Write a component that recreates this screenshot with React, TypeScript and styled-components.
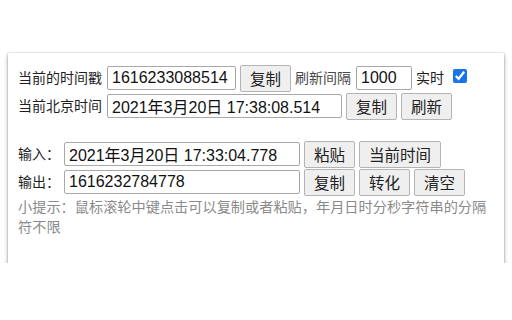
import styled, { createGlobalStyle } from "styled-components"

const Global = createGlobalStyle`
	html, body {
		margin: 0;
		background: #fff;
	}
	body {
		font-family: "Liberation Sans", "Noto Sans CJK SC", sans-serif;
		color: #222;
	}
`

export default function App() {
	return (
		<>
			<Global />
			<Page>
				<Panel>
					<Row>
						<Label>当前的时间戳</Label>
						<Field width={129} defaultValue="1616233088514" />
						<Button>复制</Button>
						<Label muted>刷新间隔</Label>
						<Field width={56} defaultValue="1000" />
						<Label>实时</Label>
						<Check type="checkbox" defaultChecked />
					</Row>
					<Row>
						<Label>当前北京时间</Label>
						<Field width={235} defaultValue="2021年3月20日 17:38:08.514" />
						<Button>复制</Button>
						<Button>刷新</Button>
					</Row>

					<Block>
						<Row>
							<Label wide>输入：</Label>
							<Field width={236} defaultValue="2021年3月20日 17:33:04.778" />
							<Button>粘贴</Button>
							<Button>当前时间</Button>
						</Row>
						<Row>
							<Label wide>输出：</Label>
							<Field width={236} defaultValue="1616232784778" />
							<Button>复制</Button>
							<Button>转化</Button>
							<Button>清空</Button>
						</Row>
						<Hint>
							小提示：鼠标滚轮中键点击可以复制或者粘贴，年月日时分秒字符串的分隔符不限
						</Hint>
					</Block>
				</Panel>
			</Page>
		</>
	)
}

//style

const Page = styled.div`
	padding: 53px 8px 0 8px;
`

const Panel = styled.div`
	width: 496px;
	box-sizing: border-box;
	padding: 11px 10px 26px 10px;
	background: #fff;
	box-shadow:
		0 2px 4px rgba(0, 0, 0, 0.4),
		0 0 1px rgba(0, 0, 0, 0.3);
`

const Row = styled.div`
	display: flex;
	align-items: center;
	height: 28px;
	gap: 4px;
`

const Block = styled.div`
	margin-top: 20px;
`

const Label = styled.span<{ muted?: boolean; wide?: boolean }>`
	font-size: 14px;
	line-height: 20px;
	white-space: nowrap;
	color: ${(p) => (p.muted ? "#4a4a4a" : "#1e1e1e")};
	width: ${(p) => (p.wide ? "41px" : "auto")};
	margin-right: 1px;
`

const Field = styled.input<{ width: number }>`
	width: ${(p) => p.width}px;
	height: 24px;
	box-sizing: border-box;
	border: 1px solid #a8a8a8;
	border-radius: 2px;
	padding: 0 3px 0 4px;
	font-family: "Liberation Sans", "Noto Sans CJK SC", sans-serif;
	font-size: 16px;
	color: #111;
	background: #fff;
	outline: none;
`

const Button = styled.button`
	height: 27px;
	box-sizing: border-box;
	padding: 0 9px;
	border: 1px solid #b4b4b4;
	border-radius: 2px;
	background: #efefef;
	font-family: "Liberation Sans", "Noto Sans CJK SC", sans-serif;
	font-size: 15.5px;
	color: #222;
	white-space: nowrap;
`

const Check = styled.input`
	width: 14px;
	height: 14px;
	margin: 0 0 4px 4px;
	accent-color: #1a73e8;
`

const Hint = styled.div`
	font-size: 14.2px;
	line-height: 20px;
	color: #8a8a8a;
	margin-top: 1px;
`
